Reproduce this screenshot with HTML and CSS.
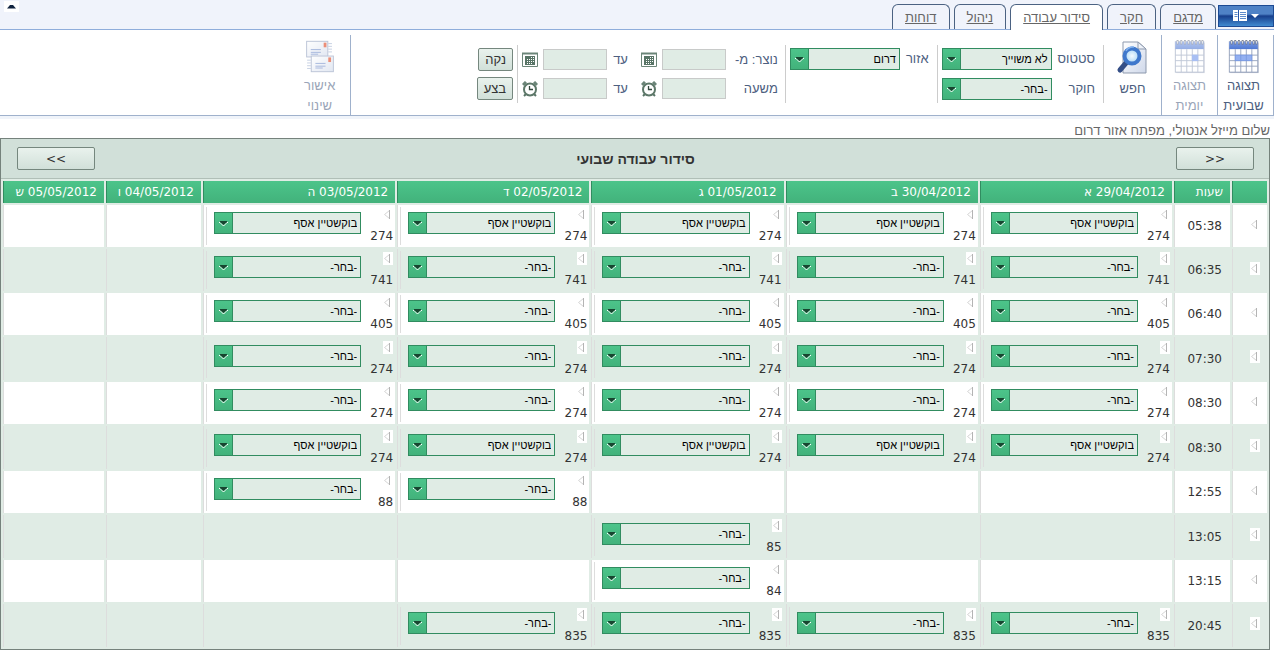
FILE: index.html
```html
<!DOCTYPE html>
<html lang="he" dir="rtl">
<head>
<meta charset="utf-8">
<title>סידור עבודה שבועי</title>
<link rel="stylesheet" href="styles.css">
</head>
<body>
<svg class="defs" aria-hidden="true">
  <defs>
    <linearGradient id="calTop" x1="0" y1="0" x2="0" y2="1"><stop offset="0" stop-color="#7b9be4"/><stop offset="1" stop-color="#4f78d2"/></linearGradient>
    <linearGradient id="paper" x1="0" y1="0" x2="1" y2="1"><stop offset="0" stop-color="#ffffff"/><stop offset="1" stop-color="#cfd8ea"/></linearGradient>
    <radialGradient id="lens"><stop offset="0" stop-color="#f4fbff"/><stop offset="1" stop-color="#a9d5f5"/></radialGradient>
    <symbol id="calendar" viewBox="0 0 34 38">
      <rect x="2" y="4" width="31" height="33" fill="#c9ced9"/>
      <rect x="1" y="3" width="31" height="33" fill="#fff" stroke="#8b99b5"/>
      <rect x="1" y="3" width="31" height="8" fill="url(#calTop)"/>
      <path d="M1 17.500H32M1 23.500H32M1 29.500H32M7.500 11V36M13.500 11V36M19.500 11V36M25.500 11V36" stroke="#95a2bd" fill="none"/>
      <path d="M3.500 1V6M7.500 1V6M11.500 1V6M15.500 1V6M19.500 1V6M23.500 1V6M27.500 1V6M30.500 1V6" stroke="#6e7686" stroke-width="2"/>
      <path d="M3.500 2V5M7.500 2V5M11.500 2V5M15.500 2V5M19.500 2V5M23.500 2V5M27.500 2V5M30.500 2V5" stroke="#e7eaf0"/>
    </symbol>
    <symbol id="date" viewBox="0 0 16 16">
      <path d="M.5 1.500H15.500V14.500H.5Z" fill="#fff" stroke="#6b8578"/>
      <path d="M0 1.500H16" stroke="#6b8578" stroke-width="2"/>
      <rect x="3" y="4" width="10" height="9" fill="#587466"/>
      <path d="M5 7h1v1H5zM7 7h1v1H7zM9 5h1v1H9zM11 5h1v1h-1zM9 7h1v1H9zM11 7h1v1h-1zM5 9h1v1H5zM7 9h1v1H7zM9 9h1v1H9zM11 9h1v1h-1zM5 11h1v1H5zM7 11h1v1H7zM9 11h1v1H9z" fill="#fff"/>
    </symbol>
    <symbol id="clock" viewBox="0 0 16 16">
      <path d="M1 4 4 1M12 1l3 3" stroke="#6b8578" stroke-width="3"/>
      <path d="M2 15l3-3M14 15l-3-3" stroke="#587466" stroke-width="2"/>
      <circle cx="8" cy="8.500" r="6" fill="#fff" stroke="#5d7869" stroke-width="2"/>
      <path d="M7.500 5V8.500H11" stroke="#34493e" fill="none" stroke-width="1.300"/>
    </symbol>
    <symbol id="move" viewBox="0 0 10 13">
      <path d="M6.500 2.500V10.500L1.500 6.500Z" fill="#fff" stroke="#d6d6d6"/>
      <path d="M6.500 2V11" stroke="#b4b4b4"/>
    </symbol>
  </defs>
</svg>

<header class="topbar">
  <button class="app-menu" aria-label="תפריט">
    <svg width="28" height="14" viewBox="0 0 28 14">
      <rect x="1" y="1" width="14" height="11" fill="#fff"/>
      <path d="M6.500 1V12" stroke="#2455a8"/>
      <path d="M2.500 3.500h3M2.500 5.500h3M2.500 7.500h3M8 3.500h6M8 5.500h6M8 7.500h6M8 9.500h6" stroke="#5f8ccb"/>
      <path d="M19 5h8l-4 4z" fill="#fff"/>
    </svg>
  </button>
  <nav class="tabs">
    <a class="tab" href="#">מדגם</a>
    <a class="tab" href="#">חקר</a>
    <a class="tab active" href="#">סידור עבודה</a>
    <a class="tab" href="#">ניהול</a>
    <a class="tab" href="#">דוחות</a>
  </nav>
  <button class="collapse" aria-label="כווץ">
    <svg width="9" height="5" viewBox="0 0 9 5"><path d="M0 4.500 3 1h3l3 3.500z" fill="#10233f"/></svg>
  </button>
</header>

<section class="ribbon">
  <button class="tool weekly">
    <svg width="34" height="38" viewBox="0 0 34 38"><use href="#calendar"/><rect x="7" y="17" width="19" height="7" fill="#6f96ec" opacity=".75"/></svg>
    <span>תצוגה<br>שבועית</span>
  </button>
  <button class="tool daily" disabled>
    <svg width="34" height="38" viewBox="0 0 34 38"><use href="#calendar"/><rect x="19" y="17" width="7" height="7" fill="#6f96ec"/></svg>
    <span>תצוגה<br>יומית</span>
  </button>
  <button class="tool search">
    <svg width="34" height="38" viewBox="0 0 34 38">
      <path d="M7 3H22L30 10V34H7Z" fill="url(#paper)" stroke="#8d99ad"/>
      <path d="M22 3V10H30Z" fill="#eef2f9" stroke="#8d99ad"/>
      <path d="M10 24 4 31" stroke="#344e86" stroke-width="5" stroke-linecap="round"/>
      <circle cx="16" cy="17" r="7.500" fill="url(#lens)" stroke="#3f78cc" stroke-width="4"/>
      <path d="M10 12a8 8 0 0 1 8-4" stroke="#83b3ee" fill="none" stroke-width="1.500"/>
    </svg>
    <span>חפש</span>
  </button>

  <div class="group pair">
    <label for="status">סטטוס</label>
    <select id="status" class="combo"><option>לא משוייך</option></select>
    <label for="surveyor">חוקר</label>
    <select id="surveyor" class="combo"><option>-בחר-</option></select>
  </div>
  <div class="group pair">
    <label for="area">אזור</label>
    <select id="area" class="combo"><option>דרום</option></select>
  </div>
  <div class="group range">
    <label for="fromDate">נוצר: מ-</label>
    <input id="fromDate" type="text">
    <button class="picker" aria-label="בחר תאריך"><svg width="16" height="16"><use href="#date"/></svg></button>
    <label for="toDate">עד</label>
    <input id="toDate" type="text">
    <button class="picker" aria-label="בחר תאריך"><svg width="16" height="16"><use href="#date"/></svg></button>
    <label for="fromHour">משעה</label>
    <input id="fromHour" type="text">
    <button class="picker" aria-label="בחר שעה"><svg width="16" height="16"><use href="#clock"/></svg></button>
    <label for="toHour">עד</label>
    <input id="toHour" type="text">
    <button class="picker" aria-label="בחר שעה"><svg width="16" height="16"><use href="#clock"/></svg></button>
  </div>
  <div class="group actions">
    <button class="btn">נקה</button>
    <button class="btn">בצע</button>
  </div>
  <button class="tool approve" disabled>
    <svg width="34" height="38" viewBox="0 0 34 38">
      <path d="M26 5h4M26 8h4M26 11h4M26 14h4M3 23h4M3 26h4M3 29h4M3 32h4" stroke="#9fb0d0"/>
      <rect x="2.500" y="2.500" width="23" height="17" fill="url(#paper)" stroke="#8d9cbc"/>
      <rect x="21" y="4" width="3" height="5" fill="#e0441f"/>
      <path d="M7 11.500H18M7 14.500H18M7 16.500H15" stroke="#6684c4"/>
      <rect x="7.500" y="18.500" width="24" height="17" fill="url(#paper)" stroke="#8d9cbc"/>
      <rect x="26" y="20" width="3" height="5" fill="#e0441f"/>
      <path d="M12 26.500H23M12 29.500H23M12 31.500H20" stroke="#6684c4"/>
    </svg>
    <span>אישור<br>שינוי</span>
  </button>
</section>

<p class="greeting">שלום מייזל אנטולי, מפתח אזור דרום</p>

<main class="board">
  <div class="board-head">
    <button class="btn nav" aria-label="שבוע קודם"><bdo dir="ltr">&gt;&gt;</bdo></button>
    <h1>סידור עבודה שבועי</h1>
    <button class="btn nav" aria-label="שבוע הבא"><bdo dir="ltr">&lt;&lt;</bdo></button>
  </div>
  <table class="schedule">
    <colgroup>
      <col class="c-move"><col class="c-hour"><col><col><col><col><col><col class="c-fri"><col class="c-sat">
    </colgroup>
    <thead>
      <tr>
        <th></th><th>שעות</th><th>29/04/2012 א</th><th>30/04/2012 ב</th><th>01/05/2012 ג</th><th>02/05/2012 ד</th><th>03/05/2012 ה</th><th>04/05/2012 ו</th><th>05/05/2012 ש</th>
      </tr>
    </thead>
    <tbody id="rows"></tbody>
  </table>
</main>
<script src="schedule.js"></script>
</body>
</html>
```
FILE: styles.css
```css
* { box-sizing: border-box; }
body {
  margin: 0;
  background: #fff;
  color: #333;
  font: 13px/18px "Liberation Sans", Arial, sans-serif;
}
button, select, input { font: inherit; color: inherit; }
button { padding: 0; border: 0; background: none; }
.defs { position: absolute; width: 0; height: 0; }

.topbar {
  display: flex;
  align-items: flex-end;
  height: 30px;
  background: #f0f3fb;
  border-bottom: 1px solid #8faddb;
}
.app-menu {
  display: flex;
  align-items: center;
  justify-content: center;
  width: 56px;
  height: 22px;
  margin-bottom: 2px;
  border: 1px solid #1c4a93;
  background: linear-gradient(#4f82c6 0 40%, #173f8c 50%, #3f8ad0);
}
.app-menu svg { direction: ltr; }
.tabs { display: flex; gap: 4px; margin-inline-start: 2px; }
.tab {
  height: 25px;
  padding: 4px 12px 0;
  border: 1px solid #4b6282;
  border-bottom: 0;
  border-radius: 6px 6px 0 0;
  color: #666;
}
.tab.active { background: #fff; height: 26px; margin-bottom: -1px; }
.collapse {
  display: flex;
  align-items: center;
  justify-content: center;
  align-self: flex-start;
  width: 15px;
  height: 11px;
  margin: 1px auto 0 4px;
  background: #fff;
}

.ribbon {
  display: flex;
  height: 89px;
  padding: 5px 0 0;
  border-bottom: 3px solid #f0f4fa;
  box-shadow: inset 0 -1px #9fb1cc;
  color: #4d6080;
}
.tool {
  display: flex;
  flex-direction: column;
  align-items: center;
  flex: none;
  width: 56px;
  padding-top: 4px;
  border-left: 1px solid #9fb1cc;
  line-height: 20px;
}
.tool.weekly { width: 57px; padding-right: 4px; border-right: 1px solid #9fb1cc; }
.tool.search { width: 57px; border: 0; }
.tool.approve { width: 61px; margin-inline-start: 126px; border-left: 0; border-right: 1px solid #9fb1cc; }
.tool:disabled { color: #9aa5b8; }
.tool:disabled svg { opacity: .6; }
.tool svg { margin-bottom: 2px; }

.group {
  display: grid;
  align-content: start;
  align-items: center;
  height: 58px;
  margin-top: 10px;
  padding-top: 3px;
  border-right: 1px solid #ccc;
}
.pair {
  grid-template-columns: auto 110px;
  gap: 8px 6px;
  padding-right: 8px;
  padding-left: 4px;
}
.range {
  grid-template-columns: 47px 64px 16px auto 64px 16px;
  grid-auto-rows: 21px;
  gap: 8px 5px;
  padding-top: 4px;
  padding-right: 7px;
  padding-left: 4px;
}
.range label { white-space: nowrap; }
.range label:nth-of-type(even) { padding: 0 8px 0 1px; }
.range input {
  width: 100%;
  height: 21px;
  border: 1px solid #c8cac9;
  background: #e0ece5;
}
.picker { display: flex; }
.actions { gap: 6px; padding-right: 4px; justify-items: start; }

.btn {
  min-width: 35px;
  height: 23px;
  padding: 0 6px;
  border: 1px solid #75877e;
  border-radius: 2px;
  background: linear-gradient(#e9f2ed, #d1e0d9);
  color: #333;
}
.combo {
  appearance: none;
  display: block;
  width: 100%;
  height: 22px;
  padding: 0 3px 0 20px;
  border: 1px solid #318c60;
  border-radius: 0;
  background:
    url("data:image/svg+xml,%3Csvg xmlns='http://www.w3.org/2000/svg' width='9' height='6'%3E%3Cpath d='M0 1.500h1L4.500 5 8 1.500h1' fill='none' stroke='white'/%3E%3Cpath d='M1 0h7v1L4.500 4 1 1z' fill='%23184530'/%3E%3C/svg%3E") 4px 8px no-repeat,
    linear-gradient(#318c60, #318c60) 17px 0 / 1px 100% no-repeat,
    linear-gradient(#4cc48a, #42b27b) 0 0 / 17px 100% no-repeat,
    #e0ece5;
  color: #000;
  font-size: 11px;
}

.greeting {
  margin: 0;
  padding: 3px 4px 0 0;
  height: 19px;
  line-height: 18px;
  color: #666;
}

.board {
  width: calc(100% - 4px);
  margin-right: 4px;
  border: 1px solid #75827c;
  background: #e0ece5;
}
.board-head {
  display: flex;
  align-items: center;
  justify-content: space-between;
  height: 40px;
  padding: 0 15px 0 16px;
  border-bottom: 1px solid #b0bfb7;
  background: #d1e0d9;
}
.board-head h1 { margin: 0; font-size: 14px; line-height: 18px; }
.nav { width: 78px; font-family: "DejaVu Sans", sans-serif; font-size: 12px; }

.schedule {
  width: 100%;
  table-layout: fixed;
  border-collapse: separate;
  border-spacing: 2px;
  font-family: "DejaVu Sans", sans-serif;
  font-size: 12px;
}
.c-move { width: 35px; }
.c-hour { width: 56px; }
.c-fri { width: 95px; }
.c-sat { width: 101px; }
.schedule th {
  height: 22px;
  padding: 0 7px 0 0;
  border-left: 1px solid #318c60;
  background: linear-gradient(#4cc48a, #42b27b);
  color: #fff;
  font-weight: normal;
  text-align: right;
  white-space: nowrap;
}
.schedule td {
  height: 42px;
  padding: 0;
  border-left: 1px solid #ddd;
  background: #fff;
}
.schedule tbody tr:nth-child(even) td { background: #e0ece5; }
.schedule tbody tr:nth-child(even):not(:nth-child(2)) td { height: 43px; }
.schedule td.hour { padding: 0 8px 0 0; }
.schedule td.row-move { padding: 0 7px 4px 0; }
.move { display: block; width: 10px; height: 13px; background: #fff; }

.slot {
  display: flex;
  align-items: flex-start;
  height: 38px;
  margin-left: 2px;
  padding-left: 7px;
  border-left: 1px solid #ddd;
}
.slot .side {
  display: flex;
  flex-direction: column;
  gap: 6px;
  flex: none;
  width: 34px;
  padding: 1px 2px 0 0;
}
.slot .combo { flex: 1; min-width: 0; margin-top: 5px; font-family: "Liberation Sans", Arial, sans-serif; font-size: 11px; }
```
FILE: schedule.js
```js
// Each shift: hour, survey number, assigned surveyor, and the weekdays (0 = Sunday) it runs on.
const NONE = "-בחר-";
const ASAF = "בוקשטיין אסף";
const shifts = [
  ["05:38", 274, ASAF, [0, 1, 2, 3, 4]],
  ["06:35", 741, NONE, [0, 1, 2, 3, 4]],
  ["06:40", 405, NONE, [0, 1, 2, 3, 4]],
  ["07:30", 274, NONE, [0, 1, 2, 3, 4]],
  ["08:30", 274, NONE, [0, 1, 2, 3, 4]],
  ["08:30", 274, ASAF, [0, 1, 2, 3, 4]],
  ["12:55", 88, NONE, [3, 4]],
  ["13:05", 85, NONE, [2]],
  ["13:15", 84, NONE, [2]],
  ["20:45", 835, NONE, [0, 1, 2, 3]]
];

const moveButton =
  '<button class="move" aria-label="העבר"><svg width="10" height="13"><use href="#move"/></svg></button>';

const slot = (hour, number, name) => `
  <div class="slot">
    <div class="side">${moveButton}<span>${number}</span></div>
    <select class="combo" aria-label="${hour} ${number}"><option>${name}</option></select>
  </div>`;

document.getElementById("rows").innerHTML = shifts
  .map(([hour, number, name, days]) => {
    const cells = [0, 1, 2, 3, 4, 5, 6]
      .map(day => `<td>${days.includes(day) ? slot(hour, number, name) : ""}</td>`)
      .join("");
    return `<tr><td class="row-move">${moveButton}</td><td class="hour">${hour}</td>${cells}</tr>`;
  })
  .join("");
```
